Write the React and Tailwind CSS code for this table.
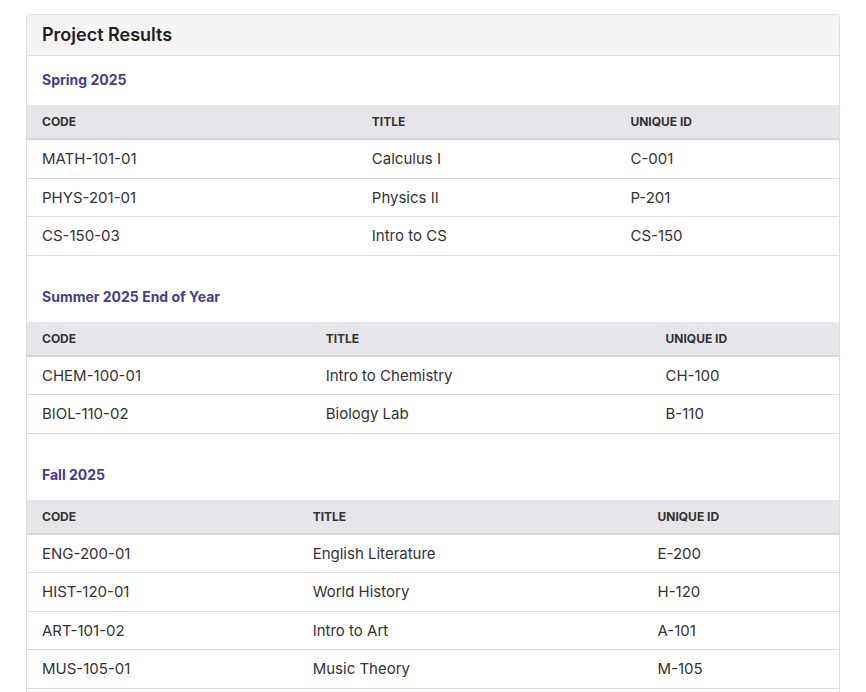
import React from 'react';

const sections = [
  {
    name: 'Spring 2025',
    cols: ['w-[329px]', 'w-[258px]', 'w-[223px]'],
    rows: [
      ['MATH-101-01', 'Calculus I', 'C-001'],
      ['PHYS-201-01', 'Physics II', 'P-201'],
      ['CS-150-03', 'Intro to CS', 'CS-150'],
    ],
  },
  {
    name: 'Summer 2025 End of Year',
    cols: ['w-[283px]', 'w-[339px]', 'w-[188px]'],
    rows: [
      ['CHEM-100-01', 'Intro to Chemistry', 'CH-100'],
      ['BIOL-110-02', 'Biology Lab', 'B-110'],
    ],
  },
  {
    name: 'Fall 2025',
    cols: ['w-[270px]', 'w-[344px]', 'w-[196px]'],
    rows: [
      ['ENG-200-01', 'English Literature', 'E-200'],
      ['HIST-120-01', 'World History', 'H-120'],
      ['ART-101-02', 'Intro to Art', 'A-101'],
      ['MUS-105-01', 'Music Theory', 'M-105'],
      ['PE-101-01', 'Physical Education', 'PE-101'],
    ],
  },
];

const headers = ['Code', 'Title', 'Unique ID'];

// One term block: purple title + table
const TermTable = ({ name, cols, rows, first }) => (
  <div className={first ? '' : 'mt-[17px]'}>
    <div className="px-[15px] pt-[14px] pb-[15px] text-[14px] leading-[20px] font-bold text-[#483d8b]">
      {name}
    </div>
    <table className="w-full table-fixed border-collapse">
      <thead>
        <tr className="bg-[#e6e5ea] border-b-2 border-[#d6d5da]">
          {headers.map((h, i) => (
            <th
              key={h}
              className={`${cols[i]} px-[15px] py-[10px] text-left text-[12px] leading-[13px] font-bold uppercase text-[#333]`}
            >
              {h}
            </th>
          ))}
        </tr>
      </thead>
      <tbody>
        {rows.map((r) => (
          <tr key={r[0]} className="border-b border-[#dddddd]">
            {r.map((c, i) => (
              <td key={i} className="px-[15px] py-[10px] text-[15px] leading-[17.5px] text-[#333]">
                {c}
              </td>
            ))}
          </tr>
        ))}
      </tbody>
    </table>
  </div>
);

export default function App() {
  return (
    <div className="min-h-screen bg-white pt-[14px] px-[26px] pb-6" style={{ fontFamily: 'Inter, "Noto Sans", sans-serif' }}>
      <div className="rounded-[4px] border border-[#dddddd] bg-white overflow-hidden">
        <div className="bg-[#f4f4f4] border-b border-[#dddddd] px-[15px] py-[10px]">
          <h2 className="text-[18px] leading-[20px] font-semibold text-[#222]">Project Results</h2>
        </div>
        {sections.map((s, i) => (
          <TermTable key={s.name} name={s.name} cols={s.cols} rows={s.rows} first={i === 0} />
        ))}
      </div>
    </div>
  );
}
